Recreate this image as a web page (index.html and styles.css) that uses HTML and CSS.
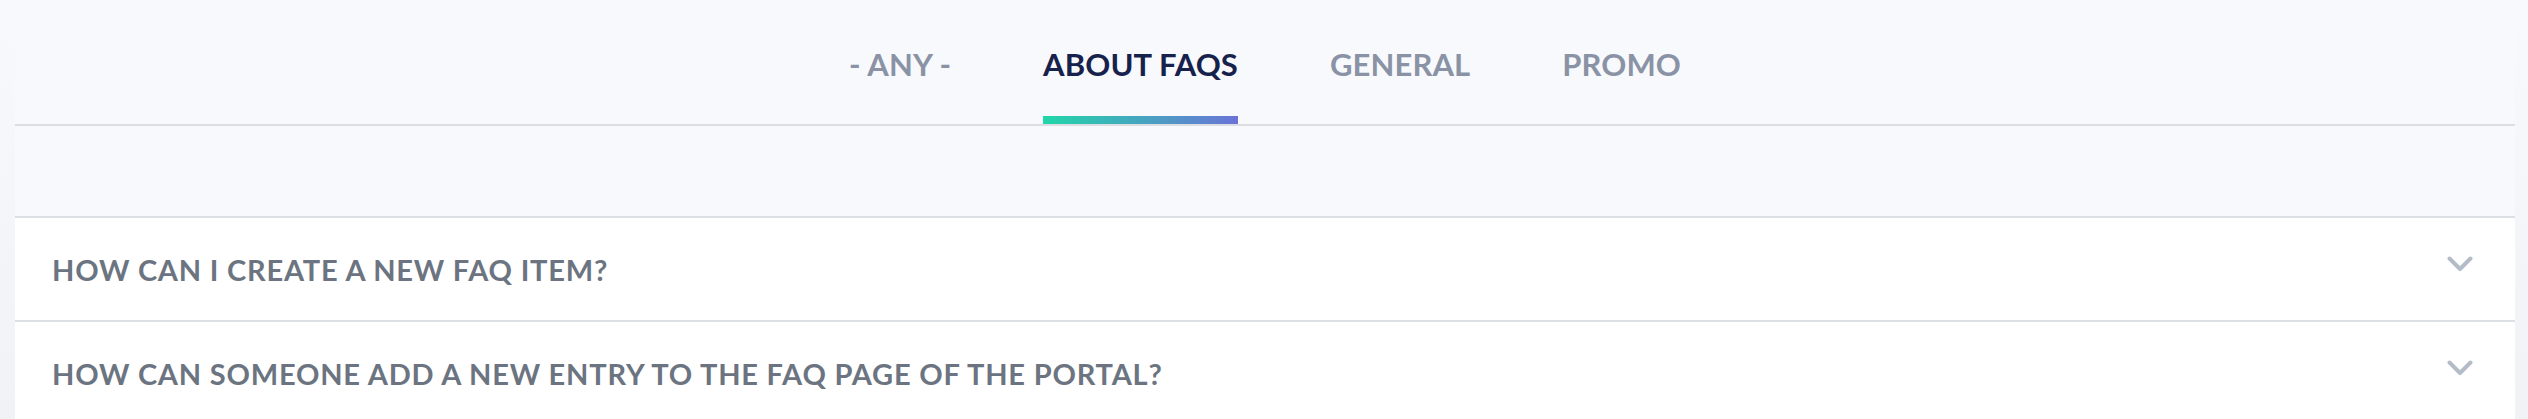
FILE: index.html
```html
<!DOCTYPE html>
<html lang="en">
<head>
<meta charset="utf-8">
<title>FAQ</title>
<link rel="stylesheet" href="styles.css">
</head>
<body>
<div class="page">
  <nav class="tabs">
    <a class="tab">- ANY -</a>
    <a class="tab active">ABOUT FAQS</a>
    <a class="tab">GENERAL</a>
    <a class="tab">PROMO</a>
  </nav>
  <div class="faq-list">
    <div class="faq-item">
      <span class="question">HOW CAN I CREATE A NEW FAQ ITEM?</span>
      <svg class="chevron" viewBox="0 0 26 16" width="26" height="16"><polyline points="2.5,2.5 13,13 23.5,2.5"/></svg>
    </div>
    <div class="faq-item">
      <span class="question">HOW CAN SOMEONE ADD A NEW ENTRY TO THE FAQ PAGE OF THE PORTAL?</span>
      <svg class="chevron" viewBox="0 0 26 16" width="26" height="16"><polyline points="2.5,2.5 13,13 23.5,2.5"/></svg>
    </div>
  </div>
</div>
</body>
</html>
```

FILE: styles.css
```css
html, body {
  margin: 0;
  padding: 0;
  height: 100%;
}
body {
  background: linear-gradient(180deg, #f8f9fd 0%, #f1f2f6 100%);
  font-family: Lato, "Liberation Sans", sans-serif;
}
.page {
  margin: 0 13px 0 15px;
  background: #f8f9fc;
  min-height: 100%;
}
.tabs {
  display: flex;
  justify-content: center;
  align-items: flex-end;
  gap: 92px;
  height: 124px;
  border-bottom: 2px solid #dcdee4;
}
.tab {
  display: block;
  font-size: 31px;
  font-weight: 700;
  letter-spacing: 0.1px;
  line-height: 31px;
  color: #8a93a5;
  padding-bottom: 44px;
  text-decoration: none;
}
.tab.active {
  color: #17224c;
  padding-bottom: 36px;
  border-bottom: 8px solid transparent;
  border-image: linear-gradient(90deg, #20d7a8, #6b73d7) 1;
}
.faq-list {
  margin-top: 90px;
  border-top: 2px solid #dcdfe4;
  background: #ffffff;
}
.faq-item {
  display: flex;
  align-items: center;
  justify-content: space-between;
  height: 102px;
  padding: 0 42px 0 37px;
  border-bottom: 2px solid #dcdfe4;
}
.question {
  font-size: 29px;
  font-weight: 700;
  letter-spacing: 0.8px;
  color: #6b7480;
  line-height: 29px;
}
.chevron {
  margin-bottom: 11px;
  fill: none;
  stroke: #b4bcc7;
  stroke-width: 4;
  stroke-linecap: round;
  stroke-linejoin: round;
}
```
